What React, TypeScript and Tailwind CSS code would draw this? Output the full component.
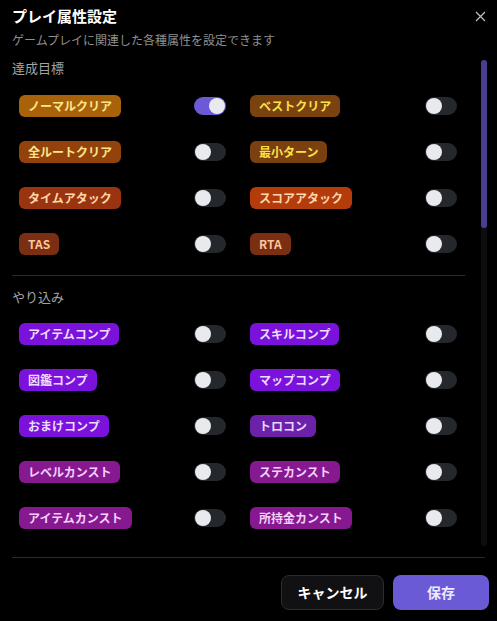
import { useState } from "react";

type Item = { label: string; bg: string; fg: string; on?: boolean };

const goals: Item[][] = [
  [
    { label: "ノーマルクリア", bg: "bg-[#a8620a]", fg: "text-[#fde68a]", on: true },
    { label: "ベストクリア", bg: "bg-[#7a420f]", fg: "text-[#fde047]" },
  ],
  [
    { label: "全ルートクリア", bg: "bg-[#94420b]", fg: "text-[#fde68a]" },
    { label: "最小ターン", bg: "bg-[#7a400f]", fg: "text-[#fde047]" },
  ],
  [
    { label: "タイムアタック", bg: "bg-[#9a3410]", fg: "text-[#fed7aa]" },
    { label: "スコアアタック", bg: "bg-[#b33b0c]", fg: "text-[#fed7aa]" },
  ],
  [
    { label: "TAS", bg: "bg-[#7a2e12]", fg: "text-[#fdc59a]" },
    { label: "RTA", bg: "bg-[#7a2e12]", fg: "text-[#fdc59a]" },
  ],
];

const completion: Item[][] = [
  [
    { label: "アイテムコンプ", bg: "bg-[#7a12dc]", fg: "text-[#ecdcff]" },
    { label: "スキルコンプ", bg: "bg-[#7a12dc]", fg: "text-[#ecdcff]" },
  ],
  [
    { label: "図鑑コンプ", bg: "bg-[#7a12dc]", fg: "text-[#ecdcff]" },
    { label: "マップコンプ", bg: "bg-[#7a12dc]", fg: "text-[#ecdcff]" },
  ],
  [
    { label: "おまけコンプ", bg: "bg-[#7a12dc]", fg: "text-[#ecdcff]" },
    { label: "トロコン", bg: "bg-[#6b21a8]", fg: "text-[#e9d5ff]" },
  ],
  [
    { label: "レベルカンスト", bg: "bg-[#86198f]", fg: "text-[#f5d0fe]" },
    { label: "ステカンスト", bg: "bg-[#86198f]", fg: "text-[#f5d0fe]" },
  ],
  [
    { label: "アイテムカンスト", bg: "bg-[#86198f]", fg: "text-[#f5d0fe]" },
    { label: "所持金カンスト", bg: "bg-[#86198f]", fg: "text-[#f5d0fe]" },
  ],
];

function Toggle({ initial }: { initial?: boolean }) {
  const [on, setOn] = useState(!!initial);
  return (
    <button
      onClick={() => setOn(!on)}
      className={`w-[32px] h-[18px] rounded-full p-[1px] flex items-center ${
        on ? "bg-[#6a5ad8] justify-end" : "bg-[#24272b] justify-start"
      }`}
    >
      <span className="w-[16px] h-[16px] rounded-full bg-[#e9eaee]" />
    </button>
  );
}

function Row({ item }: { item: Item }) {
  return (
    <div className="h-[46px] flex items-center justify-between">
      <span
        className={`h-[22px] px-[9px] rounded-md text-[12px] font-bold leading-[22px] ${item.bg} ${item.fg}`}
      >
        {item.label}
      </span>
      <Toggle initial={item.on} />
    </div>
  );
}

function Section({ title, rows, gap }: { title: string; rows: Item[][]; gap: string }) {
  return (
    <div>
      <div className="h-[20px] leading-[20px] text-[13px] text-[#a3a3a3]">{title}</div>
      <div className={`${gap} pl-[7px] pr-[8px] grid grid-cols-2 gap-x-[24px]`}>
        {rows.map((pair, i) => (
          <div key={i} className="contents">
            <Row item={pair[0]} />
            <Row item={pair[1]} />
          </div>
        ))}
      </div>
    </div>
  );
}

export default function App() {
  return (
    <div
      className="w-[497px] h-[621px] bg-black text-white flex flex-col overflow-hidden"
      style={{ fontFamily: '"Noto Sans CJK JP", "Noto Sans", sans-serif' }}
    >
      <div className="px-3 pt-[5px] relative">
        <h1 className="text-[15px] font-bold leading-[22px]">プレイ属性設定</h1>
        <p className="mt-[4px] text-[12px] leading-[18px] text-[#8f8f8f]">
          ゲームプレイに関連した各種属性を設定できます
        </p>
        <button className="absolute right-[11px] top-[11px] text-[#bdbdbd]">
          <svg width="11" height="11" viewBox="0 0 11 11" stroke="currentColor" strokeWidth="1.3">
            <path d="M1 1l9 9M10 1l-9 9" />
          </svg>
        </button>
      </div>

      <div className="mt-[7px] h-[490px] overflow-hidden relative">
        <div className="pl-3 pr-[32px] pt-[2px]">
          <Section title="達成目標" rows={goals} gap="mt-[5px]" />
          <div className="mt-[8px] border-t border-[#2b2b2b]" />
          <div className="mt-[11px]">
            <Section title="やり込み" rows={completion} gap="mt-[4px]" />
          </div>
        </div>
        <div className="absolute right-[10px] top-[4px] bottom-0 w-[6px] rounded-full bg-[#0e0e10]">
          <div className="h-[168px] rounded-full bg-[#4b3d92]" />
        </div>
      </div>

      <div className="mt-[11px] mx-3 border-t border-[#2b2b2b]" />
      <div className="flex justify-end gap-[9px] pt-[17px] pr-[8px]">
        <button className="w-[103px] h-[35px] rounded-lg bg-[#111113] border border-[#2c2c2e] text-[14px] font-bold">
          キャンセル
        </button>
        <button className="w-[96px] h-[35px] rounded-lg bg-[#6b5ad6] text-[14px] font-bold text-[#ece9ff]">
          保存
        </button>
      </div>
    </div>
  );
}
